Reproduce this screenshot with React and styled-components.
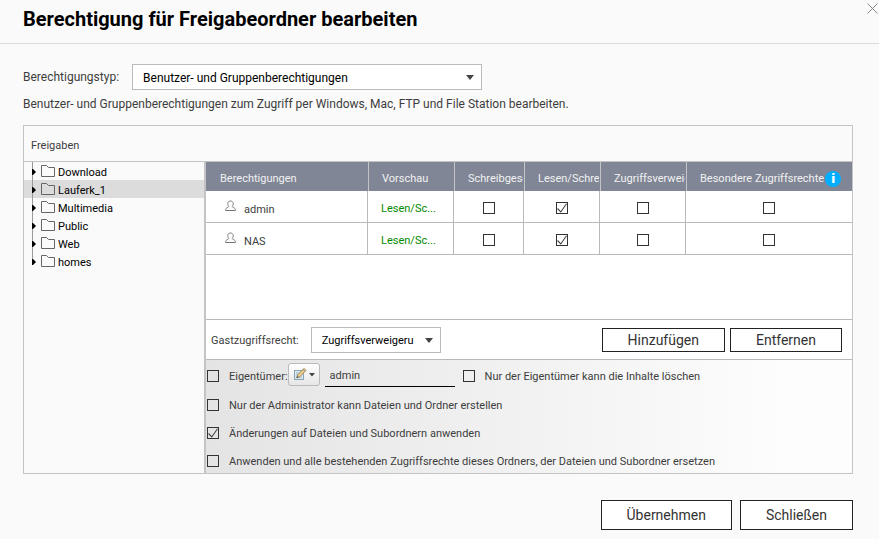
import React, { useState } from 'react';
import styled, { createGlobalStyle, css } from 'styled-components';

const GlobalStyle = createGlobalStyle`
  * {
    box-sizing: border-box;
  }
  body {
    margin: 0;
    background: #fafafa;
    color: #3d3d3d;
    font-family: Roboto, 'Liberation Sans', sans-serif;
    font-size: 11px;
    line-height: 16px;
  }
  button, input, select {
    font-family: inherit;
  }
`

const Header = styled.header`
  display: flex;
  justify-content: space-between;
  align-items: flex-start;
  height: 44px;
  padding-left: 23px;
  border-bottom: 1px solid #dcdcdc;
`

const Title = styled.h1`
  margin: 0;
  padding-top: 7px;
  color: #000;
  font-size: 20px;
  line-height: 24px;
  font-weight: 700;
`

const CloseButton = styled.button`
  display: flex;
  margin: 0;
  padding: 3px 1px 3px 3px;
  border: 0;
  background: none;
  color: #888;
  cursor: pointer;
`

const Content = styled.main`
  padding: 20px 26px 0 23px;
`

const TypeRow = styled.div`
  display: flex;
  align-items: center;
  gap: 13px;
  font-size: 12px;
`

const SelectBox = styled.div`
  position: relative;
  width: ${props => props.$width};
  &::after {
    content: '';
    position: absolute;
    top: 11px;
    right: 8px;
    border: 4px solid transparent;
    border-top: 5px solid #444;
    border-bottom: 0;
    pointer-events: none;
  }
`

const Select = styled.select`
  display: block;
  appearance: none;
  width: 100%;
  height: 26px;
  padding: 1px 20px 0 10px;
  border: 1px solid #bbb;
  border-radius: 0;
  background: #fff;
  color: #000;
  font-size: ${props => props.$size || '11px'};
`

const Intro = styled.p`
  margin: 6px 0 13px;
  font-size: 12px;
`

const Panel = styled.section`
  border: 1px solid #c4c4c4;
`

const PanelTitle = styled.h2`
  margin: 0;
  padding: 12px 7px 7px;
  border-bottom: 1px solid #c4c4c4;
  font-size: 11px;
  font-weight: 400;
`

const PanelBody = styled.div`
  display: flex;
`

const Tree = styled.ul`
  flex: 0 0 182px;
  margin: 0;
  padding: 0;
  list-style: none;
  border-right: 2px solid #c4c4c4;
`

const TreeItem = styled.li`
  display: flex;
  align-items: center;
  height: 18px;
  padding-left: 8px;
  color: #000;
  cursor: pointer;
  ${props => props.$active && css`
    background: #dcdcdc;
  `}
`

const TreeName = styled.span`
  padding: 3px 3px 0;
`

const Main = styled.div`
  flex: 1;
  min-width: 0;
`

const TableArea = styled.div`
  min-height: 158px;
  background: #fff;
  border-bottom: 1px solid #b9b9b9;
`

const Table = styled.table`
  width: 100%;
  table-layout: fixed;
  border-collapse: separate;
  border-spacing: 0;
`

const Th = styled.th`
  width: ${props => props.$width || 'auto'};
  height: 29px;
  padding: 4px 1px 0 ${props => props.$first ? '14px' : '13px'};
  background: #808696;
  border-left: ${props => props.$first ? '0' : '1px solid #c4c4c4'};
  color: #f2f2f2;
  font-weight: 400;
  text-align: left;
`

const HeadText = styled.div`
  overflow: hidden;
  white-space: nowrap;
`

const HeadGroup = styled.div`
  display: flex;
  align-items: center;
  gap: 1px;
`

const Info = styled.span`
  flex: none;
  width: 16px;
  height: 16px;
  border-radius: 50%;
  background: #00aeff;
  color: #fff;
  font: 700 13px/16px 'DejaVu Sans', sans-serif;
  text-align: center;
`

const Td = styled.td`
  height: 32px;
  padding: ${props => props.$center ? '2px 0 0' : '4px 0 0 13px'};
  border-right: 1px solid #b9b9b9;
  border-bottom: 1px solid #b9b9b9;
  color: ${props => props.$green ? '#008a00' : 'inherit'};
  text-align: ${props => props.$center ? 'center' : 'left'};
  &:last-child {
    border-right: 0;
  }
`

const User = styled.div`
  display: flex;
  align-items: flex-start;
  gap: 8px;
  padding-left: 6px;
`

const UserName = styled.span`
  padding-top: 2px;
`

const Check = styled.input`
  appearance: none;
  display: inline-block;
  flex: none;
  width: 12px;
  height: 12px;
  margin: 0;
  border: 1px solid #333;
  background: transparent;
  vertical-align: middle;
  &:checked {
    background: url("data:image/svg+xml,%3Csvg xmlns='http://www.w3.org/2000/svg' viewBox='0 0 10 10'%3E%3Cpath d='M0.5 5.5L3.8 9L9.5 0.8' fill='none' stroke='%23444' stroke-width='1.1'/%3E%3C/svg%3E");
  }
`

const GuestRow = styled.div`
  display: flex;
  align-items: center;
  gap: 12px;
  height: 40px;
  padding: 0 10px 0 5px;
  background: #fff;
  border-bottom: 1px solid #b9b9b9;
`

const GuestLabel = styled.label`
  padding-top: 2px;
`

const Buttons = styled.div`
  display: flex;
  gap: ${props => props.$gap};
  margin-left: auto;
`

const Button = styled.button`
  height: ${props => props.$large ? '30px' : '24px'};
  padding: 0 25px;
  border: 1px solid #222;
  background: #fff;
  color: #333;
  font-size: 14px;
  line-height: 16px;
  cursor: pointer;
`

const Options = styled.div`
  display: flex;
  flex-direction: column;
  gap: 4px;
  padding: 3px 0 0 1px;
  background: linear-gradient(to right, #e4e4e4, #fdfdfd 90%);
`

const OptionRow = styled.div`
  display: flex;
  align-items: center;
  min-height: ${props => props.$tall ? '26px' : '24px'};
`

const OptionLabel = styled.label`
  display: flex;
  align-items: center;
  gap: 10px;
`

const OptionText = styled.span`
  padding-top: 2px;
`

const EditButton = styled.button`
  display: flex;
  align-items: center;
  align-self: flex-start;
  gap: 2px;
  width: 32px;
  height: 23px;
  padding: 0 4px;
  border: 1px solid #bbb;
  border-radius: 3px;
  background: linear-gradient(#fff, #e6e6e6);
  cursor: pointer;
`

const OwnerInput = styled.input`
  align-self: flex-start;
  width: 130px;
  height: 24px;
  margin: 0 8px 0 5px;
  padding: 2px 5px 0;
  border: 0;
  border-bottom: 1px solid #000;
  background: transparent;
  color: #3d3d3d;
  font-size: 11px;
`

const Footer = styled.footer`
  display: flex;
  padding: 26px 26px 9px;
`

const CloseIcon = () => (
  <svg width="11" height="11" viewBox="0 0 11 11" stroke="currentColor" fill="none">
    <path d="M0.5 0.5l10 10M10.5 0.5l-10 10" />
  </svg>
)

const Branch = ({ last }) => (
  <svg width="5" height="18" viewBox="0 0 5 18">
    <path d={last ? 'M0.5 0v10' : 'M0.5 0v18'} stroke="#999" />
    <path d="M0 7h1l3 3-3 3H0z" fill="#000" />
  </svg>
)

const FolderIcon = () => (
  <svg width="18" height="18" viewBox="0 0 18 18" fill="none" stroke="#666">
    <path d="M4.500 3.500h5l2 2h6v9h-13z" />
  </svg>
)

const UserIcon = () => (
  <svg width="11" height="12" viewBox="0 0 11 12" fill="none" stroke="#777">
    <path d="M3.500 6.200C2 4 2.700 1 5.500 1s3.500 3 2 5.200c-.3.500 0 .9.700 1.200C9.700 8 10.500 8.800 10.500 10.500h-10C.5 8.800 1.300 8 2.800 7.400c.7-.3 1-.7.7-1.200z" />
  </svg>
)

const PencilIcon = () => (
  <svg width="14" height="16" viewBox="0 0 14 16">
    <rect x="1.500" y="3.500" width="9" height="9" fill="#d9eaf3" stroke="#8ba3b1" />
    <path d="M3 6h5M3 8h3M3 10h6" stroke="#9eb8c5" />
    <path d="M3.800 10.800l1-3L11 1.400l2 2L6.800 9.800z" fill="#f3cd83" stroke="#8a7a5a" strokeWidth=".8" />
    <path d="M3.600 11l.8-2 1.300 1.200z" fill="#444" />
    <path d="M10 2.400l2 2" stroke="#888" />
  </svg>
)

const folders = ['Download', 'Lauferk_1', 'Multimedia', 'Public', 'Web', 'homes'];
const users = ['admin', 'NAS'];
const rights = ['Schreibgeschützt', 'Lesen/Schreiben', 'Zugriffsverweigerung', 'Besondere Zugriffsrechte'];

const Option = ({ label, checked }) => (
  <OptionLabel>
    <Check type="checkbox" defaultChecked={checked} />
    <OptionText>{label}</OptionText>
  </OptionLabel>
)

const App = () => {
  const [folder, setFolder] = useState('Lauferk_1');

  return (
    <>
      <GlobalStyle />
      <Header>
        <Title>Berechtigung für Freigabeordner bearbeiten</Title>
        <CloseButton aria-label="Fenster schließen"><CloseIcon /></CloseButton>
      </Header>
      <Content>
        <TypeRow>
          <label htmlFor="type">Berechtigungstyp:</label>
          <SelectBox $width="350px">
            <Select id="type" $size="12px">
              <option>Benutzer- und Gruppenberechtigungen</option>
            </Select>
          </SelectBox>
        </TypeRow>
        <Intro>Benutzer- und Gruppenberechtigungen zum Zugriff per Windows, Mac, FTP und File Station bearbeiten.</Intro>
        <Panel>
          <PanelTitle>Freigaben</PanelTitle>
          <PanelBody>
            <Tree>
              {folders.map((name, i) => (
                <TreeItem key={name} $active={name === folder} onClick={() => setFolder(name)}>
                  <Branch last={i === folders.length - 1} />
                  <FolderIcon />
                  <TreeName>{name}</TreeName>
                </TreeItem>
              ))}
            </Tree>
            <Main>
              <TableArea>
                <Table>
                  <thead>
                    <tr>
                      <Th $width="162px" $first>Berechtigungen</Th>
                      <Th $width="86px">Vorschau</Th>
                      <Th $width="70px"><HeadText>{rights[0]}</HeadText></Th>
                      <Th $width="76px"><HeadText>{rights[1]}</HeadText></Th>
                      <Th $width="86px"><HeadText>{rights[2]}</HeadText></Th>
                      <Th>
                        <HeadGroup>
                          <HeadText>{rights[3]}</HeadText>
                          <Info>i</Info>
                        </HeadGroup>
                      </Th>
                    </tr>
                  </thead>
                  <tbody>
                    {users.map(user => (
                      <tr key={user}>
                        <Td>
                          <User>
                            <UserIcon />
                            <UserName>{user}</UserName>
                          </User>
                        </Td>
                        <Td $green>Lesen/Sc...</Td>
                        {rights.map((right, i) => (
                          <Td key={right} $center>
                            <Check type="checkbox" aria-label={`${user}: ${right}`} defaultChecked={i === 1} />
                          </Td>
                        ))}
                      </tr>
                    ))}
                  </tbody>
                </Table>
              </TableArea>
              <GuestRow>
                <GuestLabel htmlFor="guest">Gastzugriffsrecht:</GuestLabel>
                <SelectBox $width="130px">
                  <Select id="guest">
                    <option>Zugriffsverweigeru</option>
                  </Select>
                </SelectBox>
                <Buttons $gap="5px">
                  <Button>Hinzufügen</Button>
                  <Button>Entfernen</Button>
                </Buttons>
              </GuestRow>
              <Options>
                <OptionRow $tall>
                  <Option label="Eigentümer:" />
                  <EditButton aria-label="Eigentümer wählen">
                    <PencilIcon />
                    <svg width="6" height="4" viewBox="0 0 6 4"><path d="M0 0h6L3 3.500z" fill="#444" /></svg>
                  </EditButton>
                  <OwnerInput aria-label="Eigentümer" defaultValue="admin" />
                  <Option label="Nur der Eigentümer kann die Inhalte löschen" />
                </OptionRow>
                <OptionRow>
                  <Option label="Nur der Administrator kann Dateien und Ordner erstellen" />
                </OptionRow>
                <OptionRow>
                  <Option label="Änderungen auf Dateien und Subordnern anwenden" checked />
                </OptionRow>
                <OptionRow>
                  <Option label="Anwenden und alle bestehenden Zugriffsrechte dieses Ordners, der Dateien und Subordner ersetzen" />
                </OptionRow>
              </Options>
            </Main>
          </PanelBody>
        </Panel>
      </Content>
      <Footer>
        <Buttons $gap="8px">
          <Button $large>Übernehmen</Button>
          <Button $large>Schließen</Button>
        </Buttons>
      </Footer>
    </>
  )
}

export default App;
